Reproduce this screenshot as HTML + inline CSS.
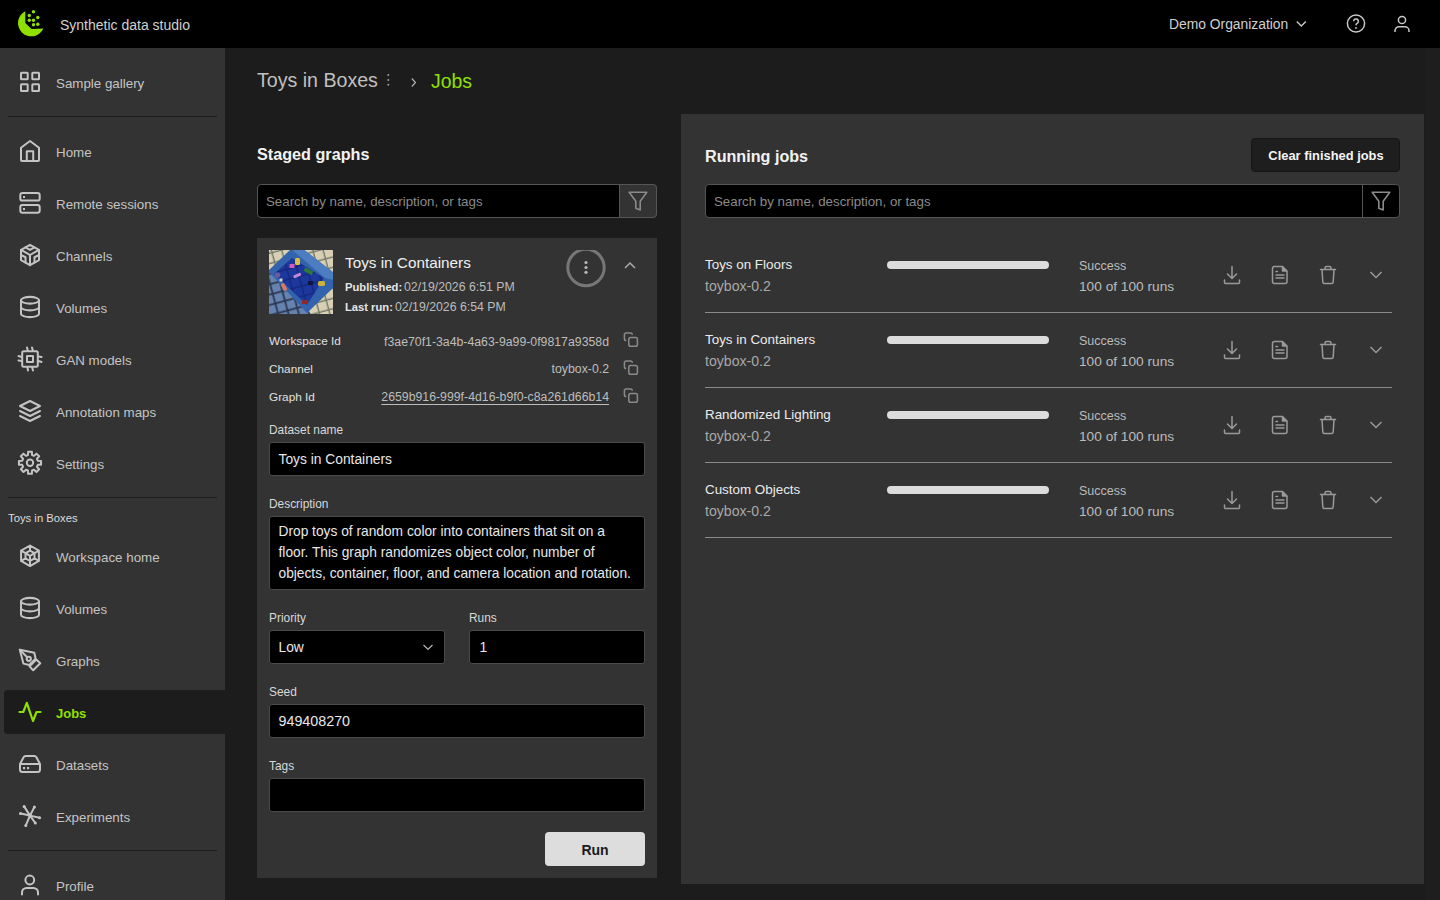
<!DOCTYPE html>
<html><head><meta charset="utf-8">
<style>
*{box-sizing:border-box;margin:0;padding:0}
html,body{width:1440px;height:900px;overflow:hidden;background:#1c1c1c;font-family:"Liberation Sans",sans-serif}
.a{position:absolute;display:block}
.t{position:absolute;white-space:nowrap}
svg{overflow:visible}
</style></head><body>
<div class="a" style="left:0px;top:0px;width:1440px;height:48px;background:#000;"></div>
<div class="a" style="left:0px;top:48px;width:225px;height:852px;background:#333333;"></div>
<div class="a" style="left:225px;top:48px;width:1215px;height:852px;background:#1c1c1c;"></div>
<div class="a" style="left:1425px;top:48px;width:15px;height:852px;background:#1e1e1e;"></div>
<svg class="a" style="left:14px;top:8px;" width="32" height="32" viewBox="0 0 32 32"><g fill="#8fe000"><path d="M11.3,3.2 L11.3,15 L17.5,21 L29.4,20.6 A13.3,13.3 0 1 1 11.3,3.2 Z"/><circle cx="19.5" cy="3.8" r="1.7"/><circle cx="15.3" cy="7.5" r="1.7"/><circle cx="23.8" cy="9.5" r="1.7"/><circle cx="15.3" cy="12.3" r="1.7"/><circle cx="19.5" cy="12.3" r="1.7"/><circle cx="19.5" cy="16.8" r="1.7"/><circle cx="23.8" cy="16.3" r="1.7"/></g></svg>
<div class="t" style="left:60px;top:18.15px;font-size:14px;line-height:14px;color:#d0d0d0;font-weight:400;">Synthetic data studio</div>
<div class="t" style="left:1169px;top:18.28px;font-size:13.85px;line-height:13.85px;color:#d0d0d0;font-weight:400;">Demo Organization</div>
<svg class="a" style="left:1290px;top:5px;" width="20" height="30" viewBox="0 0 20 30"><path d="M6.8,16.5 L11.3,21 L15.8,16.5" fill="none" stroke="#c8c8c8" stroke-width="1.4"/></svg>
<svg class="a" style="left:1344px;top:12px;" width="24" height="24" viewBox="0 0 24 24"><circle cx="12" cy="11.5" r="8.6" fill="none" stroke="#c8c8c8" stroke-width="1.5"/><path d="M9.6,9.3 a2.4,2.4 0 1 1 3.6,2.1 c-0.8,0.5 -1.2,0.9 -1.2,1.9" fill="none" stroke="#c8c8c8" stroke-width="1.5"/><circle cx="12" cy="16" r="0.9" fill="#c8c8c8"/></svg>
<svg class="a" style="left:1390px;top:12px;" width="24" height="24" viewBox="0 0 24 24"><circle cx="12" cy="8" r="3.6" fill="none" stroke="#c8c8c8" stroke-width="1.5"/><path d="M5,20 V18.8 a4,4 0 0 1 4,-4 h6 a4,4 0 0 1 4,4 V20" fill="none" stroke="#c8c8c8" stroke-width="1.5"/></svg>
<div class="a" style="left:4px;top:690px;width:221px;height:44px;background:#1c1c1c;border-radius:4px 0 0 4px"></div>
<svg class="a" style="left:14px;top:66px;" width="32" height="32" viewBox="0 0 32 32"><g fill="none" stroke="#c4c4c4" stroke-width="2" stroke-linecap="round" stroke-linejoin="round"><rect x="7" y="6.7" width="6.7" height="6.6" rx="0.6"/><rect x="18.3" y="6.7" width="6.7" height="6.6" rx="0.6"/><rect x="7" y="18.3" width="6.7" height="6.7" rx="0.6"/><rect x="18.3" y="18.3" width="6.7" height="6.7" rx="0.6"/></g></svg>
<div class="t" style="left:56px;top:76.70px;font-size:13.35px;line-height:13.35px;color:#c4c4c4;font-weight:400;">Sample gallery</div>
<svg class="a" style="left:14px;top:135px;" width="32" height="32" viewBox="0 0 32 32"><g fill="none" stroke="#c4c4c4" stroke-width="2" stroke-linecap="round" stroke-linejoin="round"><path d="M7,25 V12.8 L16,6 L25,12.8 V25 Q25,26 24,26 H8 Q7,26 7,25 Z"/><path d="M12.8,26 V16.2 H19.2 V26"/></g></svg>
<div class="t" style="left:56px;top:145.70px;font-size:13.35px;line-height:13.35px;color:#c4c4c4;font-weight:400;">Home</div>
<svg class="a" style="left:14px;top:187px;" width="32" height="32" viewBox="0 0 32 32"><g fill="none" stroke="#c4c4c4" stroke-width="2" stroke-linecap="round" stroke-linejoin="round"><rect x="6.3" y="6" width="19.4" height="7.6" rx="2.2"/><rect x="6.3" y="18.1" width="19.4" height="7.6" rx="2.2"/></g><rect x="9" y="9" width="2" height="2" fill="#c4c4c4"/><rect x="9" y="21" width="2" height="2" fill="#c4c4c4"/></svg>
<div class="t" style="left:56px;top:197.70px;font-size:13.35px;line-height:13.35px;color:#c4c4c4;font-weight:400;">Remote sessions</div>
<svg class="a" style="left:14px;top:239px;" width="32" height="32" viewBox="0 0 32 32"><g transform="translate(16,16) scale(1.125) translate(-12,-12)" fill="none" stroke="#c4c4c4" stroke-width="1.778" stroke-linecap="round" stroke-linejoin="round"><path d="M20 7.5v9l-4 2.25l-4 2.25l-4 -2.25l-4 -2.25v-9l4 -2.25l4 -2.25l4 2.25z"/><path d="M12 12l4 -2.25l4 -2.25"/><path d="M12 12l0 9"/><path d="M12 12l-4 -2.25l-4 -2.25"/><path d="M20 12l-4 2v4.75"/><path d="M4 12l4 2l0 4.75"/><path d="M8 5.25l4 2.25l4 -2.25"/></g></svg>
<div class="t" style="left:56px;top:249.70px;font-size:13.35px;line-height:13.35px;color:#c4c4c4;font-weight:400;">Channels</div>
<svg class="a" style="left:14px;top:291px;" width="32" height="32" viewBox="0 0 32 32"><g transform="translate(16,16) scale(1.125) translate(-12,-12)" fill="none" stroke="#c4c4c4" stroke-width="1.778" stroke-linecap="round" stroke-linejoin="round"><ellipse cx="12" cy="6" rx="8" ry="3"/><path d="M4 6v6a8 3 0 0 0 16 0v-6"/><path d="M4 12v6a8 3 0 0 0 16 0v-6"/></g></svg>
<div class="t" style="left:56px;top:301.70px;font-size:13.35px;line-height:13.35px;color:#c4c4c4;font-weight:400;">Volumes</div>
<svg class="a" style="left:14px;top:343px;" width="32" height="32" viewBox="0 0 32 32"><g fill="none" stroke="#c4c4c4" stroke-width="2" stroke-linecap="round" stroke-linejoin="round"><rect x="8.2" y="8.2" width="15.6" height="15.6" rx="1.5"/><rect x="13" y="13" width="6" height="6"/><path d="M4.5,13 L7.5,14 M4.5,17.5 L7.5,18 M13,4.5 L13.8,7.5 M18,4.5 L18.8,7.5 M27.5,14 L24.5,13.5 M27.5,19 L24.5,18 M13.5,24.5 L14,27.5 M18.2,24.5 L19,27.5"/></g></svg>
<div class="t" style="left:56px;top:353.70px;font-size:13.35px;line-height:13.35px;color:#c4c4c4;font-weight:400;">GAN models</div>
<svg class="a" style="left:14px;top:395px;" width="32" height="32" viewBox="0 0 32 32"><g transform="translate(16,16) scale(1.25) translate(-12,-12)" fill="none" stroke="#c4c4c4" stroke-width="1.600" stroke-linecap="round" stroke-linejoin="round"><path d="M12 4l-8 4l8 4l8 -4l-8 -4"/><path d="M4 12l8 4l8 -4"/><path d="M4 16l8 4l8 -4"/></g></svg>
<div class="t" style="left:56px;top:405.70px;font-size:13.35px;line-height:13.35px;color:#c4c4c4;font-weight:400;">Annotation maps</div>
<svg class="a" style="left:14px;top:447px;" width="32" height="32" viewBox="0 0 32 32"><path d="M13.94,8.07 L14.11,4.76 L17.89,4.76 L18.06,8.07 L20.01,8.88 L22.47,6.65 L25.15,9.33 L22.92,11.79 L23.73,13.74 L27.04,13.91 L27.04,17.69 L23.73,17.86 L22.92,19.81 L25.15,22.27 L22.47,24.95 L20.01,22.72 L18.06,23.53 L17.89,26.84 L14.11,26.84 L13.94,23.53 L11.99,22.72 L9.53,24.95 L6.85,22.27 L9.08,19.81 L8.27,17.86 L4.96,17.69 L4.96,13.91 L8.27,13.74 L9.08,11.79 L6.85,9.33 L9.53,6.65 L11.99,8.88Z" fill="none" stroke="#c4c4c4" stroke-width="2" stroke-linecap="round" stroke-linejoin="round"/><circle cx="16" cy="15.8" r="3.2" fill="none" stroke="#c4c4c4" stroke-width="2" stroke-linecap="round" stroke-linejoin="round"/></svg>
<div class="t" style="left:56px;top:457.70px;font-size:13.35px;line-height:13.35px;color:#c4c4c4;font-weight:400;">Settings</div>
<svg class="a" style="left:14px;top:540px;" width="32" height="32" viewBox="0 0 32 32"><path d="M16.00,5.50 L24.92,10.65 L24.92,20.95 L16.00,26.10 L7.08,20.95 L7.08,10.65ZM16.00,10.60 L20.50,13.20 L20.50,18.40 L16.00,21.00 L11.50,18.40 L11.50,13.20ZM16.00,5.50 L16.00,10.60M24.92,10.65 L20.50,13.20M24.92,20.95 L20.50,18.40M16.00,26.10 L16.00,21.00M7.08,20.95 L11.50,18.40M7.08,10.65 L11.50,13.20M16,15.8 L20.50,13.20 M16,15.8 L11.50,13.20 M16,15.8 L16.00,21.00" fill="none" stroke="#c4c4c4" stroke-width="2" stroke-linecap="round" stroke-linejoin="round" stroke-width="1.8"/></svg>
<div class="t" style="left:56px;top:550.70px;font-size:13.35px;line-height:13.35px;color:#c4c4c4;font-weight:400;">Workspace home</div>
<svg class="a" style="left:14px;top:592px;" width="32" height="32" viewBox="0 0 32 32"><g transform="translate(16,16) scale(1.125) translate(-12,-12)" fill="none" stroke="#c4c4c4" stroke-width="1.778" stroke-linecap="round" stroke-linejoin="round"><ellipse cx="12" cy="6" rx="8" ry="3"/><path d="M4 6v6a8 3 0 0 0 16 0v-6"/><path d="M4 12v6a8 3 0 0 0 16 0v-6"/></g></svg>
<div class="t" style="left:56px;top:602.70px;font-size:13.35px;line-height:13.35px;color:#c4c4c4;font-weight:400;">Volumes</div>
<svg class="a" style="left:14px;top:644px;" width="32" height="32" viewBox="0 0 32 32"><g fill="none" stroke="#c4c4c4" stroke-width="2" stroke-linecap="round" stroke-linejoin="round"><path d="M5.8,5.8 L20.3,8.8 L21.6,14.7 L15.2,21 L9.4,19.6 Z"/><path d="M5.8,5.8 L13.2,13.2"/><circle cx="14.8" cy="14.8" r="2.1"/><path d="M15.6,22.3 L22.3,15.6 L26.3,19.2 L19.2,26.3 Z"/></g></svg>
<div class="t" style="left:56px;top:654.70px;font-size:13.35px;line-height:13.35px;color:#c4c4c4;font-weight:400;">Graphs</div>
<svg class="a" style="left:14px;top:696px;" width="32" height="32" viewBox="0 0 32 32"><path d="M5.5,16 H9.3 L12.8,6.8 L19,25 L22.5,16 H26.5" fill="none" stroke="#8fe000" stroke-width="2.2" stroke-linecap="round" stroke-linejoin="round"/></svg>
<div class="t" style="left:56px;top:707.00px;font-size:13px;line-height:13px;color:#8fe000;font-weight:700;">Jobs</div>
<svg class="a" style="left:14px;top:748px;" width="32" height="32" viewBox="0 0 32 32"><g fill="none" stroke="#c4c4c4" stroke-width="2" stroke-linecap="round" stroke-linejoin="round"><path d="M6,16 L9.6,9.2 Q10.3,8 11.6,8 H20.4 Q21.7,8 22.4,9.2 L26,16 V21.5 Q26,24 23.5,24 H8.5 Q6,24 6,21.5 Z M6,16 H26"/></g><rect x="9" y="19" width="2.2" height="2.2" fill="#c4c4c4"/><rect x="13" y="19" width="2.2" height="2.2" fill="#c4c4c4"/></svg>
<div class="t" style="left:56px;top:758.70px;font-size:13.35px;line-height:13.35px;color:#c4c4c4;font-weight:400;">Datasets</div>
<svg class="a" style="left:14px;top:800px;" width="32" height="32" viewBox="0 0 32 32"><g fill="none" stroke="#c4c4c4" stroke-width="2" stroke-linecap="round" stroke-linejoin="round" stroke-width="1.9"><path d="M16,15.6 L10.1,6.4 M16,15.6 L20.4,7 M16,15.6 L6.5,13.6 M16,15.6 L25.6,17.8 M16,15.6 L21.3,23 M16,15.6 L11.8,25.4"/></g><g fill="#c4c4c4"><circle cx="10.1" cy="6.4" r="1.5"/><circle cx="20.4" cy="7" r="1.5"/><circle cx="6.5" cy="13.6" r="1.5"/><circle cx="25.6" cy="17.8" r="1.5"/><circle cx="21.3" cy="23" r="1.5"/><circle cx="11.8" cy="25.4" r="1.5"/><circle cx="16" cy="15.6" r="2"/></g></svg>
<div class="t" style="left:56px;top:810.70px;font-size:13.35px;line-height:13.35px;color:#c4c4c4;font-weight:400;">Experiments</div>
<svg class="a" style="left:14px;top:869px;" width="32" height="32" viewBox="0 0 32 32"><g fill="none" stroke="#c4c4c4" stroke-width="2" stroke-linecap="round" stroke-linejoin="round"><circle cx="15.8" cy="11" r="4.4"/><path d="M8,25.5 V23.5 a4.6,4.6 0 0 1 4.6,-4.6 h6.8 a4.6,4.6 0 0 1 4.6,4.6 V25.5"/></g></svg>
<div class="t" style="left:56px;top:879.70px;font-size:13.35px;line-height:13.35px;color:#c4c4c4;font-weight:400;">Profile</div>
<div class="a" style="left:8px;top:116px;width:209px;height:1px;background:#1d1d1d;"></div>
<div class="a" style="left:8px;top:497px;width:209px;height:1px;background:#1d1d1d;"></div>
<div class="a" style="left:8px;top:850px;width:209px;height:1px;background:#1d1d1d;"></div>
<div class="t" style="left:8px;top:513.43px;font-size:11.3px;line-height:11.3px;color:#dcdcdc;font-weight:400;">Toys in Boxes</div>
<div class="t" style="left:257px;top:71.41px;font-size:19.6px;line-height:19.6px;color:#c0c0c0;font-weight:400;">Toys in Boxes</div>
<svg class="a" style="left:384px;top:70px;" width="8" height="20" viewBox="0 0 8 20"><g fill="#9c9c9c"><circle cx="4.3" cy="5" r="1.0"/><circle cx="4.3" cy="10" r="1.0"/><circle cx="4.3" cy="14.8" r="1.0"/></g></svg>
<svg class="a" style="left:406px;top:74px;" width="14" height="16" viewBox="0 0 14 16"><path d="M5.8,4.5 L9.5,8.5 L5.8,12.5" fill="none" stroke="#b4b4b4" stroke-width="1.15"/></svg>
<div class="t" style="left:431px;top:71.58px;font-size:19.4px;line-height:19.4px;color:#8fe000;font-weight:400;">Jobs</div>
<div class="t" style="left:257px;top:145.79px;font-size:16.2px;line-height:16.2px;color:#f2f2f2;font-weight:700;">Staged graphs</div>
<div class="a" style="left:257px;top:184px;width:400px;height:34px;background:#000;border:1px solid #555;border-radius:4px"></div>
<div class="a" style="left:619px;top:184px;width:38px;height:34px;background:#333;border:1px solid #555;border-radius:0 4px 4px 0"></div>
<div class="t" style="left:266px;top:194.74px;font-size:13.3px;line-height:13.3px;color:#8a8a8a;font-weight:400;">Search by name, description, or tags</div>
<svg class="a" style="left:626px;top:189px;" width="24" height="24" viewBox="0 0 24 24"><path d="M3.2,3.2 H20.8 L14.2,12.2 V21 L9.8,19.2 V12.2 Z" fill="none" stroke="#8a8a8a" stroke-width="1.6" stroke-linejoin="round"/></svg>
<div class="a" style="left:257px;top:238px;width:400px;height:640px;background:#333;"></div>
<svg class="a" style="left:269px;top:250px;" width="64" height="64" viewBox="0 0 64 64">
<defs><clipPath id="tc"><rect x="0" y="0" width="64" height="64"/></clipPath>
<filter id="bl" x="-5%" y="-5%" width="110%" height="110%"><feGaussianBlur stdDeviation="0.45"/></filter>
<pattern id="tiles" width="10" height="10" patternUnits="userSpaceOnUse" patternTransform="rotate(-15) translate(2,3)"><rect width="10" height="10" fill="#6f7868"/><rect x="1" y="1" width="8.6" height="8.6" fill="#d9cfb4"/></pattern>
<pattern id="tiles2" width="10" height="10" patternUnits="userSpaceOnUse" patternTransform="rotate(-15) translate(2,3)"><rect width="10" height="10" fill="#2b3650"/><rect x="1.2" y="1.2" width="8.2" height="8.2" fill="#6683b0"/></pattern>
<pattern id="tiles3" width="10" height="10" patternUnits="userSpaceOnUse" patternTransform="rotate(-15) translate(2,3)"><rect width="10" height="10" fill="#142676"/><rect x="0.9" y="0.9" width="8.8" height="8.8" fill="#1c379c"/></pattern>
</defs>
<g clip-path="url(#tc)" filter="url(#bl)">
<rect width="64" height="64" fill="url(#tiles)"/>
<path d="M0,19 L42,64 L0,64 Z" fill="url(#tiles2)"/>
<path d="M-1,21 L22,-1 L34,-1 L65,23 L65,37 L38,63 Z" fill="#3163ac"/>
<path d="M22,-1 L34,-1 L65,23 L65,30 L56,28 Z" fill="#4b7dc0"/>
<path d="M5,24 L23,8 L55,28 L38,55 Z" fill="url(#tiles3)"/>
<rect x="26" y="8" width="5" height="7" rx="1.5" fill="#d8c23a"/>
<rect x="20.5" y="14" width="5" height="4" fill="#d25bb8"/>
<rect x="24" y="24" width="8" height="3" rx="1.2" fill="#c08ad8" transform="rotate(-25 28 25)"/>
<rect x="35" y="19" width="9" height="4" fill="#2d7a3a" transform="rotate(30 39 21)"/>
<rect x="13" y="33" width="4" height="8" rx="1.5" fill="#d47a6a" transform="rotate(-30 15 37)"/>
<circle cx="8.5" cy="25" r="2.8" fill="#6a5aa0"/>
<rect x="10.5" y="28.5" width="3" height="3" fill="#d0d0d0"/>
<rect x="49" y="31" width="7" height="5" rx="1.5" fill="#c9b33a"/>
<rect x="33" y="50" width="6" height="4" fill="#8a2a2a"/>
<rect x="39" y="31" width="5" height="4" fill="#0c1540"/>
</g></svg>
<div class="t" style="left:345px;top:255.05px;font-size:15.3px;line-height:15.3px;color:#f0f0f0;font-weight:400;">Toys in Containers</div>
<div class="t" style="left:345px;top:281.72px;font-size:11.2px;line-height:11.2px;color:#e6e6e6;font-weight:700;">Published:</div>
<div class="t" style="left:404px;top:280.79px;font-size:12.3px;line-height:12.3px;color:#bdbdbd;font-weight:400;">02/19/2026 6:51 PM</div>
<div class="t" style="left:345px;top:301.72px;font-size:11.2px;line-height:11.2px;color:#e6e6e6;font-weight:700;">Last run:</div>
<div class="t" style="left:395px;top:300.79px;font-size:12.3px;line-height:12.3px;color:#bdbdbd;font-weight:400;">02/19/2026 6:54 PM</div>
<svg class="a" style="left:560px;top:238px;" width="52" height="52" viewBox="0 0 52 52"><defs><clipPath id="kc"><rect x="0" y="12" width="52" height="40"/></clipPath></defs><circle clip-path="url(#kc)" cx="26" cy="29.5" r="18.2" fill="none" stroke="#777" stroke-width="3"/><g fill="#b8b8b8"><circle cx="26" cy="24.5" r="1.6"/><circle cx="26" cy="29.5" r="1.6"/><circle cx="26" cy="34.3" r="1.6"/></g></svg>
<svg class="a" style="left:620px;top:255px;" width="20" height="20" viewBox="0 0 20 20"><path d="M5,13 L10,8 L15,13" fill="none" stroke="#aaa" stroke-width="1.5"/></svg>
<div class="t" style="left:269px;top:336.01px;font-size:11.8px;line-height:11.8px;color:#e0e0e0;font-weight:400;">Workspace Id</div>
<div class="t" style="right:831px;top:335.59px;font-size:12.3px;line-height:12.3px;color:#bdbdbd;font-weight:400;">f3ae70f1-3a4b-4a63-9a99-0f9817a9358d</div>
<svg class="a" style="left:621px;top:330px;" width="20" height="20" viewBox="0 0 20 20"><g fill="none" stroke="#8a8a8a" stroke-width="1.5" stroke-linejoin="round"><path d="M5.2,10.5 Q3.4,10.5 3.4,8.7 V4.8 Q3.4,3 5.2,3 H9.5 Q11.3,3 11.3,4.8"/><rect x="7.8" y="7.5" width="8.6" height="8.7" rx="1.8"/></g></svg>
<div class="t" style="left:269px;top:363.81px;font-size:11.8px;line-height:11.8px;color:#e0e0e0;font-weight:400;">Channel</div>
<div class="t" style="right:831px;top:363.39px;font-size:12.3px;line-height:12.3px;color:#bdbdbd;font-weight:400;">toybox-0.2</div>
<svg class="a" style="left:621px;top:357.8px;" width="20" height="20" viewBox="0 0 20 20"><g fill="none" stroke="#8a8a8a" stroke-width="1.5" stroke-linejoin="round"><path d="M5.2,10.5 Q3.4,10.5 3.4,8.7 V4.8 Q3.4,3 5.2,3 H9.5 Q11.3,3 11.3,4.8"/><rect x="7.8" y="7.5" width="8.6" height="8.7" rx="1.8"/></g></svg>
<div class="t" style="left:269px;top:391.61px;font-size:11.8px;line-height:11.8px;color:#e0e0e0;font-weight:400;">Graph Id</div>
<div class="t" style="right:831px;top:391.19px;font-size:12.3px;line-height:12.3px;color:#bdbdbd;font-weight:400;text-decoration:underline;text-underline-offset:3px;">2659b916-999f-4d16-b9f0-c8a261d66b14</div>
<svg class="a" style="left:621px;top:385.6px;" width="20" height="20" viewBox="0 0 20 20"><g fill="none" stroke="#8a8a8a" stroke-width="1.5" stroke-linejoin="round"><path d="M5.2,10.5 Q3.4,10.5 3.4,8.7 V4.8 Q3.4,3 5.2,3 H9.5 Q11.3,3 11.3,4.8"/><rect x="7.8" y="7.5" width="8.6" height="8.7" rx="1.8"/></g></svg>
<div class="t" style="left:269px;top:424.93px;font-size:11.9px;line-height:11.9px;color:#d8d8d8;font-weight:400;">Dataset name</div>
<div class="a" style="left:269px;top:442px;width:376px;height:34px;background:#000;border:1px solid #4a4a4a;border-radius:3px"></div>
<div class="t" style="left:278.5px;top:452.62px;font-size:13.8px;line-height:13.8px;color:#e8e8e8;font-weight:400;">Toys in Containers</div>
<div class="t" style="left:269px;top:498.93px;font-size:11.9px;line-height:11.9px;color:#d8d8d8;font-weight:400;">Description</div>
<div class="a" style="left:269px;top:516px;width:376px;height:74px;background:#000;border:1px solid #4a4a4a;border-radius:3px"></div>
<div class="t" style="left:278.5px;top:525.36px;font-size:13.75px;line-height:13.75px;color:#e8e8e8;font-weight:400;">Drop toys of random color into containers that sit on a</div>
<div class="t" style="left:278.5px;top:546.06px;font-size:13.75px;line-height:13.75px;color:#e8e8e8;font-weight:400;">floor. This graph randomizes object color, number of</div>
<div class="t" style="left:278.5px;top:566.76px;font-size:13.75px;line-height:13.75px;color:#e8e8e8;font-weight:400;">objects, container, floor, and camera location and rotation.</div>
<div class="t" style="left:269px;top:613.13px;font-size:11.9px;line-height:11.9px;color:#d8d8d8;font-weight:400;">Priority</div>
<div class="a" style="left:269px;top:630px;width:176px;height:34px;background:#000;border:1px solid #4a4a4a;border-radius:3px"></div>
<div class="t" style="left:278.5px;top:640.52px;font-size:13.8px;line-height:13.8px;color:#e8e8e8;font-weight:400;">Low</div>
<svg class="a" style="left:418px;top:637px;" width="20" height="20" viewBox="0 0 20 20"><path d="M5.5,8 L10,12.3 L14.5,8" fill="none" stroke="#aaa" stroke-width="1.3"/></svg>
<div class="t" style="left:469px;top:613.13px;font-size:11.9px;line-height:11.9px;color:#d8d8d8;font-weight:400;">Runs</div>
<div class="a" style="left:469px;top:630px;width:176px;height:34px;background:#000;border:1px solid #4a4a4a;border-radius:3px"></div>
<div class="t" style="left:479.5px;top:640.52px;font-size:13.8px;line-height:13.8px;color:#e8e8e8;font-weight:400;">1</div>
<div class="t" style="left:269px;top:686.63px;font-size:11.9px;line-height:11.9px;color:#d8d8d8;font-weight:400;">Seed</div>
<div class="a" style="left:269px;top:704px;width:376px;height:34px;background:#000;border:1px solid #4a4a4a;border-radius:3px"></div>
<div class="t" style="left:278.5px;top:714.30px;font-size:14.3px;line-height:14.3px;color:#e8e8e8;font-weight:400;">949408270</div>
<div class="t" style="left:269px;top:760.83px;font-size:11.9px;line-height:11.9px;color:#d8d8d8;font-weight:400;">Tags</div>
<div class="a" style="left:269px;top:778px;width:376px;height:34px;background:#000;border:1px solid #4a4a4a;border-radius:3px"></div>
<div class="a" style="left:545px;top:832px;width:100px;height:34px;background:#dddddd;border-radius:4px"></div>
<div class="t" style="left:295px;width:600px;text-align:center;top:843.45px;font-size:14px;line-height:14px;color:#1a1a1a;font-weight:700;">Run</div>
<div class="a" style="left:681px;top:114px;width:743px;height:770px;background:#333;"></div>
<div class="t" style="left:705px;top:148.33px;font-size:16.15px;line-height:16.15px;color:#f2f2f2;font-weight:700;">Running jobs</div>
<div class="a" style="left:1251px;top:138px;width:149px;height:34px;background:#1e1e1e;border:1px solid #151515;border-radius:4px"></div>
<div class="t" style="left:1026px;width:600px;text-align:center;top:150.08px;font-size:12.9px;line-height:12.9px;color:#f4f4f4;font-weight:700;">Clear finished jobs</div>
<div class="a" style="left:705px;top:184px;width:695px;height:34px;background:#000;border:1px solid #555;border-radius:4px"></div>
<div class="a" style="left:1362px;top:184px;width:1px;height:34px;background:#555;"></div>
<div class="t" style="left:714px;top:194.74px;font-size:13.3px;line-height:13.3px;color:#8a8a8a;font-weight:400;">Search by name, description, or tags</div>
<svg class="a" style="left:1369px;top:189px;" width="24" height="24" viewBox="0 0 24 24"><path d="M3.2,3.2 H20.8 L14.2,12.2 V21 L9.8,19.2 V12.2 Z" fill="none" stroke="#8a8a8a" stroke-width="1.6" stroke-linejoin="round"/></svg>
<div class="t" style="left:705px;top:258.26px;font-size:13.4px;line-height:13.4px;color:#ececec;font-weight:400;">Toys on Floors</div>
<div class="t" style="left:705px;top:278.66px;font-size:14.1px;line-height:14.1px;color:#a8a8a8;font-weight:400;">toybox-0.2</div>
<div class="a" style="left:887px;top:261px;width:162px;height:8px;background:#dcdcdc;border-radius:4px"></div>
<div class="t" style="left:1079px;top:259.92px;font-size:12.5px;line-height:12.5px;color:#bcbcbc;font-weight:400;">Success</div>
<div class="t" style="left:1079px;top:279.60px;font-size:13.7px;line-height:13.7px;color:#bcbcbc;font-weight:400;">100 of 100 runs</div>
<svg class="a" style="left:1220px;top:262px;" width="24" height="24" viewBox="0 0 24 24"><g fill="none" stroke="#9a9a9a" stroke-width="1.5" stroke-linecap="round" stroke-linejoin="round"><path d="M12,4.5 V16.5 M7.5,12 L12,16.5 L16.5,12"/><path d="M4.5,18 V20.5 Q4.5,21.5 5.5,21.5 H18.5 Q19.5,21.5 19.5,20.5 V18"/></g></svg>
<svg class="a" style="left:1268px;top:262px;" width="24" height="24" viewBox="0 0 24 24"><g fill="none" stroke="#9a9a9a" stroke-width="1.5" stroke-linejoin="round"><path d="M6.5,4.5 H14.5 L19,9 V19.5 Q19,21.5 17,21.5 H6.5 Q4.5,21.5 4.5,19.5 V6.5 Q4.5,4.5 6.5,4.5 Z"/><path d="M14.5,4.5 V9 H19" fill="#9a9a9a"/><path d="M8,9.5 H9.5 M8,13 H16 M8,16 H16" stroke-linecap="round"/></g></svg>
<svg class="a" style="left:1316px;top:262px;" width="24" height="24" viewBox="0 0 24 24"><g fill="none" stroke="#9a9a9a" stroke-width="1.5" stroke-linejoin="round" stroke-linecap="round"><path d="M4.5,7.5 H19.5"/><path d="M9,7.5 V6 Q9,4.5 10.5,4.5 H13.5 Q15,4.5 15,6 V7.5"/><path d="M6,7.5 L6.8,20 Q6.9,21.5 8.3,21.5 H15.7 Q17.1,21.5 17.2,20 L18,7.5"/></g></svg>
<svg class="a" style="left:1366px;top:264px;" width="20" height="20" viewBox="0 0 20 20"><path d="M4.5,8 L10,13.5 L15.5,8" fill="none" stroke="#9a9a9a" stroke-width="1.5"/></svg>
<div class="a" style="left:705px;top:312px;width:687px;height:1px;background:#8a8a8a;"></div>
<div class="t" style="left:705px;top:333.26px;font-size:13.4px;line-height:13.4px;color:#ececec;font-weight:400;">Toys in Containers</div>
<div class="t" style="left:705px;top:353.66px;font-size:14.1px;line-height:14.1px;color:#a8a8a8;font-weight:400;">toybox-0.2</div>
<div class="a" style="left:887px;top:336px;width:162px;height:8px;background:#dcdcdc;border-radius:4px"></div>
<div class="t" style="left:1079px;top:334.92px;font-size:12.5px;line-height:12.5px;color:#bcbcbc;font-weight:400;">Success</div>
<div class="t" style="left:1079px;top:354.60px;font-size:13.7px;line-height:13.7px;color:#bcbcbc;font-weight:400;">100 of 100 runs</div>
<svg class="a" style="left:1220px;top:337px;" width="24" height="24" viewBox="0 0 24 24"><g fill="none" stroke="#9a9a9a" stroke-width="1.5" stroke-linecap="round" stroke-linejoin="round"><path d="M12,4.5 V16.5 M7.5,12 L12,16.5 L16.5,12"/><path d="M4.5,18 V20.5 Q4.5,21.5 5.5,21.5 H18.5 Q19.5,21.5 19.5,20.5 V18"/></g></svg>
<svg class="a" style="left:1268px;top:337px;" width="24" height="24" viewBox="0 0 24 24"><g fill="none" stroke="#9a9a9a" stroke-width="1.5" stroke-linejoin="round"><path d="M6.5,4.5 H14.5 L19,9 V19.5 Q19,21.5 17,21.5 H6.5 Q4.5,21.5 4.5,19.5 V6.5 Q4.5,4.5 6.5,4.5 Z"/><path d="M14.5,4.5 V9 H19" fill="#9a9a9a"/><path d="M8,9.5 H9.5 M8,13 H16 M8,16 H16" stroke-linecap="round"/></g></svg>
<svg class="a" style="left:1316px;top:337px;" width="24" height="24" viewBox="0 0 24 24"><g fill="none" stroke="#9a9a9a" stroke-width="1.5" stroke-linejoin="round" stroke-linecap="round"><path d="M4.5,7.5 H19.5"/><path d="M9,7.5 V6 Q9,4.5 10.5,4.5 H13.5 Q15,4.5 15,6 V7.5"/><path d="M6,7.5 L6.8,20 Q6.9,21.5 8.3,21.5 H15.7 Q17.1,21.5 17.2,20 L18,7.5"/></g></svg>
<svg class="a" style="left:1366px;top:339px;" width="20" height="20" viewBox="0 0 20 20"><path d="M4.5,8 L10,13.5 L15.5,8" fill="none" stroke="#9a9a9a" stroke-width="1.5"/></svg>
<div class="a" style="left:705px;top:387px;width:687px;height:1px;background:#8a8a8a;"></div>
<div class="t" style="left:705px;top:408.26px;font-size:13.4px;line-height:13.4px;color:#ececec;font-weight:400;">Randomized Lighting</div>
<div class="t" style="left:705px;top:428.66px;font-size:14.1px;line-height:14.1px;color:#a8a8a8;font-weight:400;">toybox-0.2</div>
<div class="a" style="left:887px;top:411px;width:162px;height:8px;background:#dcdcdc;border-radius:4px"></div>
<div class="t" style="left:1079px;top:409.92px;font-size:12.5px;line-height:12.5px;color:#bcbcbc;font-weight:400;">Success</div>
<div class="t" style="left:1079px;top:429.60px;font-size:13.7px;line-height:13.7px;color:#bcbcbc;font-weight:400;">100 of 100 runs</div>
<svg class="a" style="left:1220px;top:412px;" width="24" height="24" viewBox="0 0 24 24"><g fill="none" stroke="#9a9a9a" stroke-width="1.5" stroke-linecap="round" stroke-linejoin="round"><path d="M12,4.5 V16.5 M7.5,12 L12,16.5 L16.5,12"/><path d="M4.5,18 V20.5 Q4.5,21.5 5.5,21.5 H18.5 Q19.5,21.5 19.5,20.5 V18"/></g></svg>
<svg class="a" style="left:1268px;top:412px;" width="24" height="24" viewBox="0 0 24 24"><g fill="none" stroke="#9a9a9a" stroke-width="1.5" stroke-linejoin="round"><path d="M6.5,4.5 H14.5 L19,9 V19.5 Q19,21.5 17,21.5 H6.5 Q4.5,21.5 4.5,19.5 V6.5 Q4.5,4.5 6.5,4.5 Z"/><path d="M14.5,4.5 V9 H19" fill="#9a9a9a"/><path d="M8,9.5 H9.5 M8,13 H16 M8,16 H16" stroke-linecap="round"/></g></svg>
<svg class="a" style="left:1316px;top:412px;" width="24" height="24" viewBox="0 0 24 24"><g fill="none" stroke="#9a9a9a" stroke-width="1.5" stroke-linejoin="round" stroke-linecap="round"><path d="M4.5,7.5 H19.5"/><path d="M9,7.5 V6 Q9,4.5 10.5,4.5 H13.5 Q15,4.5 15,6 V7.5"/><path d="M6,7.5 L6.8,20 Q6.9,21.5 8.3,21.5 H15.7 Q17.1,21.5 17.2,20 L18,7.5"/></g></svg>
<svg class="a" style="left:1366px;top:414px;" width="20" height="20" viewBox="0 0 20 20"><path d="M4.5,8 L10,13.5 L15.5,8" fill="none" stroke="#9a9a9a" stroke-width="1.5"/></svg>
<div class="a" style="left:705px;top:462px;width:687px;height:1px;background:#8a8a8a;"></div>
<div class="t" style="left:705px;top:483.26px;font-size:13.4px;line-height:13.4px;color:#ececec;font-weight:400;">Custom Objects</div>
<div class="t" style="left:705px;top:503.66px;font-size:14.1px;line-height:14.1px;color:#a8a8a8;font-weight:400;">toybox-0.2</div>
<div class="a" style="left:887px;top:486px;width:162px;height:8px;background:#dcdcdc;border-radius:4px"></div>
<div class="t" style="left:1079px;top:484.92px;font-size:12.5px;line-height:12.5px;color:#bcbcbc;font-weight:400;">Success</div>
<div class="t" style="left:1079px;top:504.60px;font-size:13.7px;line-height:13.7px;color:#bcbcbc;font-weight:400;">100 of 100 runs</div>
<svg class="a" style="left:1220px;top:487px;" width="24" height="24" viewBox="0 0 24 24"><g fill="none" stroke="#9a9a9a" stroke-width="1.5" stroke-linecap="round" stroke-linejoin="round"><path d="M12,4.5 V16.5 M7.5,12 L12,16.5 L16.5,12"/><path d="M4.5,18 V20.5 Q4.5,21.5 5.5,21.5 H18.5 Q19.5,21.5 19.5,20.5 V18"/></g></svg>
<svg class="a" style="left:1268px;top:487px;" width="24" height="24" viewBox="0 0 24 24"><g fill="none" stroke="#9a9a9a" stroke-width="1.5" stroke-linejoin="round"><path d="M6.5,4.5 H14.5 L19,9 V19.5 Q19,21.5 17,21.5 H6.5 Q4.5,21.5 4.5,19.5 V6.5 Q4.5,4.5 6.5,4.5 Z"/><path d="M14.5,4.5 V9 H19" fill="#9a9a9a"/><path d="M8,9.5 H9.5 M8,13 H16 M8,16 H16" stroke-linecap="round"/></g></svg>
<svg class="a" style="left:1316px;top:487px;" width="24" height="24" viewBox="0 0 24 24"><g fill="none" stroke="#9a9a9a" stroke-width="1.5" stroke-linejoin="round" stroke-linecap="round"><path d="M4.5,7.5 H19.5"/><path d="M9,7.5 V6 Q9,4.5 10.5,4.5 H13.5 Q15,4.5 15,6 V7.5"/><path d="M6,7.5 L6.8,20 Q6.9,21.5 8.3,21.5 H15.7 Q17.1,21.5 17.2,20 L18,7.5"/></g></svg>
<svg class="a" style="left:1366px;top:489px;" width="20" height="20" viewBox="0 0 20 20"><path d="M4.5,8 L10,13.5 L15.5,8" fill="none" stroke="#9a9a9a" stroke-width="1.5"/></svg>
<div class="a" style="left:705px;top:537px;width:687px;height:1px;background:#8a8a8a;"></div>
</body></html>
